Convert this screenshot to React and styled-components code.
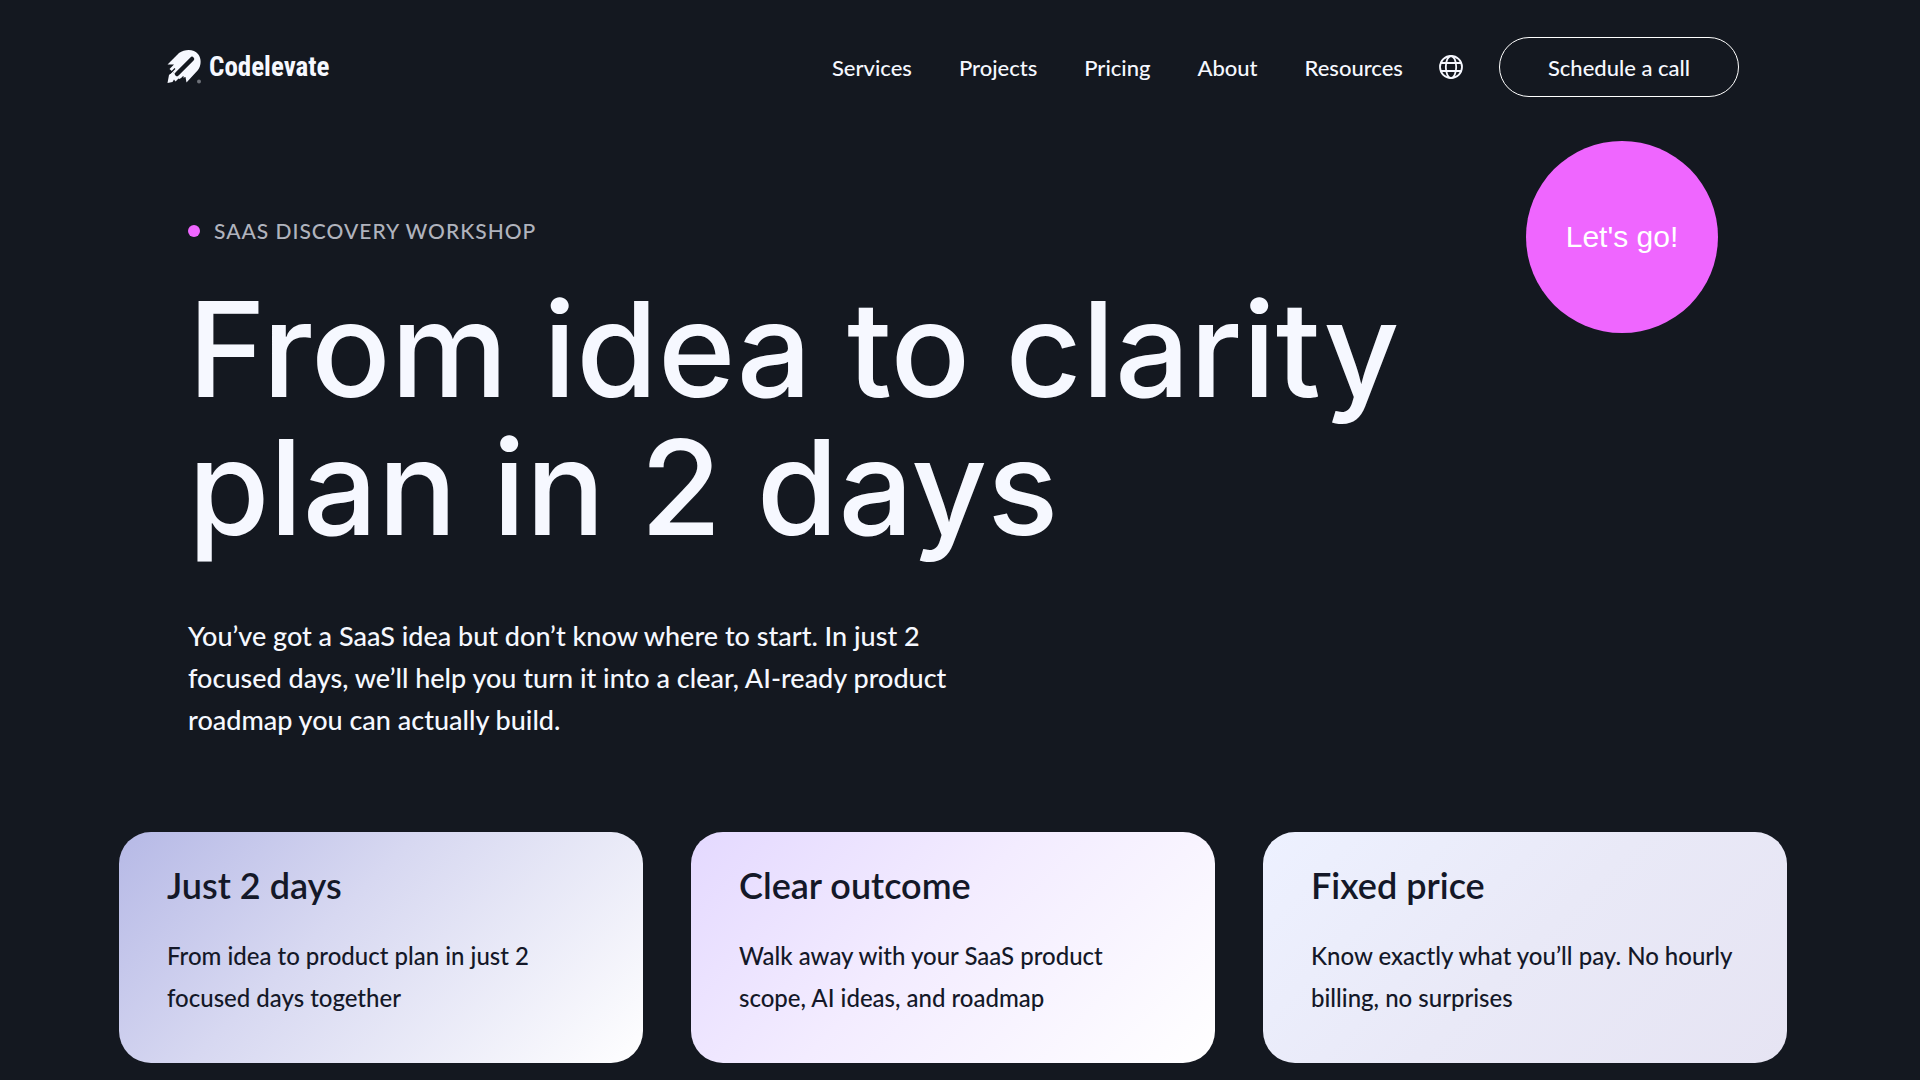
import React from "react";
import styled, { createGlobalStyle } from "styled-components";

const GlobalStyle = createGlobalStyle`
  * {
    box-sizing: border-box;
  }

  body {
    margin: 0;
    background: #141820;
    color: #f6f8ff;
    font-family: Lato, "Liberation Sans", sans-serif;
    font-weight: 500;
  }
`;

const Page = styled.div`
  min-height: 100vh;
  padding: 37px 133px 16px 119px;
`;

const Header = styled.header`
  display: flex;
  align-items: center;
  justify-content: space-between;
  padding: 0 48px;
`;

const Brand = styled.a`
  display: flex;
  align-items: center;
  gap: 7px;
  color: inherit;
  text-decoration: none;
  font-family: "Roboto Condensed", "Noto Sans Condensed", Roboto, sans-serif;
  font-size: 27px;
  font-weight: 700;
`;

const Nav = styled.nav`
  display: flex;
  align-items: center;
  gap: 47px;
`;

const NavLink = styled.a`
  color: inherit;
  text-decoration: none;
  font-size: 22px;
`;

const Actions = styled.div`
  display: flex;
  align-items: center;
  gap: 36px;
`;

const IconButton = styled.button`
  display: flex;
  padding: 0;
  border: 0;
  background: none;
  color: inherit;
`;

const CallButton = styled.button`
  height: 60px;
  padding: 0 48px;
  border: 1px solid #fff;
  border-radius: 30px;
  background: none;
  color: inherit;
  font-family: inherit;
  font-size: 22px;
  font-weight: inherit;
`;

const Hero = styled.section`
  display: flex;
  justify-content: space-between;
  align-items: flex-start;
  padding: 44px 69px 91px;
`;

const Intro = styled.div`
  padding-top: 76px;
`;

const Kicker = styled.p`
  display: flex;
  align-items: center;
  gap: 14px;
  margin: 0;
  color: #b0b3bd;
  font-size: 21px;
  line-height: 28px;
  letter-spacing: 1px;
  text-transform: uppercase;
`;

const Dot = styled.span`
  width: 12px;
  height: 12px;
  border-radius: 50%;
  background: #ef66ff;
`;

const Title = styled.h1`
  max-width: 1250px;
  margin: 35px 0 59px;
  font-family: Inter, "Liberation Sans", sans-serif;
  font-size: 132px;
  font-weight: 500;
  line-height: 138px;
`;

const Lead = styled.p`
  max-width: 780px;
  margin: 0;
  font-size: 27px;
  line-height: 42px;
`;

const GoButton = styled.button`
  flex: none;
  width: 192px;
  height: 192px;
  border: 0;
  border-radius: 50%;
  background: #ef66ff;
  color: #fff;
  font-family: "Liberation Sans", sans-serif;
  font-size: 30px;
`;

const Cards = styled.section`
  display: grid;
  grid-template-columns: repeat(3, 1fr);
  gap: 48px;
`;

const Card = styled.article`
  padding: 31px 48px 44px;
  border-radius: 32px;
  background: ${({ $background }) => $background};
  color: #141828;
`;

const CardTitle = styled.h2`
  margin: 0 0 28px;
  font-size: 36px;
  font-weight: 600;
  line-height: 44px;
`;

const CardText = styled.p`
  margin: 0;
  font-size: 24px;
  line-height: 42px;
`;

const links = ["Services", "Projects", "Pricing", "About", "Resources"];

const cards = [
  {
    title: "Just 2 days",
    text: "From idea to product plan in just 2 focused days together",
    background: "linear-gradient(135deg, #b6b9e6 0%, #d7d8f1 40%, #fff 100%)",
  },
  {
    title: "Clear outcome",
    text: "Walk away with your SaaS product scope, AI ideas, and roadmap",
    background: "linear-gradient(135deg, #e4d9ff 0%, #f3ecff 45%, #fff 100%)",
  },
  {
    title: "Fixed price",
    text: "Know exactly what you’ll pay. No hourly billing, no surprises",
    background: "linear-gradient(135deg, #edf1ff 0%, #e9e9f7 50%, #e6e4f3 100%)",
  },
];

const RocketLogo = () => (
  <svg width="35" height="34" viewBox="0 0 35 34" fill="currentColor" aria-hidden="true">
    <path d="M0.5 14.5 L12 3 C18 -1 27 -1 31 4 C35 9 34 16 31 20 L19.5 32.5 L18.5 27 L12 29 L7 23 L2.5 19 L7 14.5 Z" />
    <path d="M2 25 L5.5 21.5 L12 28 L8.5 31.5 L7 29.5 L5.5 32 L0.5 33 Z" />
    <path d="M25 9 L10 24" fill="none" stroke="#141820" strokeWidth="4.5" strokeLinecap="round" />
    <path d="M8 18.5 L3 23.5 M16.5 26.5 L11 32" fill="none" stroke="#141820" strokeWidth="1.2" />
    <circle cx="32" cy="31.5" r="2" opacity="0.4" />
  </svg>
);

const Globe = () => (
  <svg width="24" height="24" viewBox="0 0 24 24" fill="none" stroke="currentColor" strokeWidth="1.8" aria-hidden="true">
    <circle cx="12" cy="12" r="11" />
    <ellipse cx="12" cy="12" rx="5.2" ry="11" />
    <path d="M1.6 8h20.8M1.6 16h20.8" />
  </svg>
);

const App = () => {
  return (
    <Page>
      <GlobalStyle />
      <Header>
        <Brand href="#">
          <RocketLogo />
          Codelevate
        </Brand>
        <Actions>
          <Nav>
            {links.map((link) => (
              <NavLink key={link} href="#">
                {link}
              </NavLink>
            ))}
          </Nav>
          <IconButton aria-label="Language">
            <Globe />
          </IconButton>
          <CallButton>Schedule a call</CallButton>
        </Actions>
      </Header>
      <Hero>
        <Intro>
          <Kicker>
            <Dot />
            SaaS discovery workshop
          </Kicker>
          <Title>From idea to clarity plan in 2 days</Title>
          <Lead>
            You’ve got a SaaS idea but don’t know where to start. In just 2
            focused days, we’ll help you turn it into a clear, AI-ready product
            roadmap you can actually build.
          </Lead>
        </Intro>
        <GoButton>Let's go!</GoButton>
      </Hero>
      <Cards>
        {cards.map(({ title, text, background }) => (
          <Card key={title} $background={background}>
            <CardTitle>{title}</CardTitle>
            <CardText>{text}</CardText>
          </Card>
        ))}
      </Cards>
    </Page>
  );
};

export default App;
